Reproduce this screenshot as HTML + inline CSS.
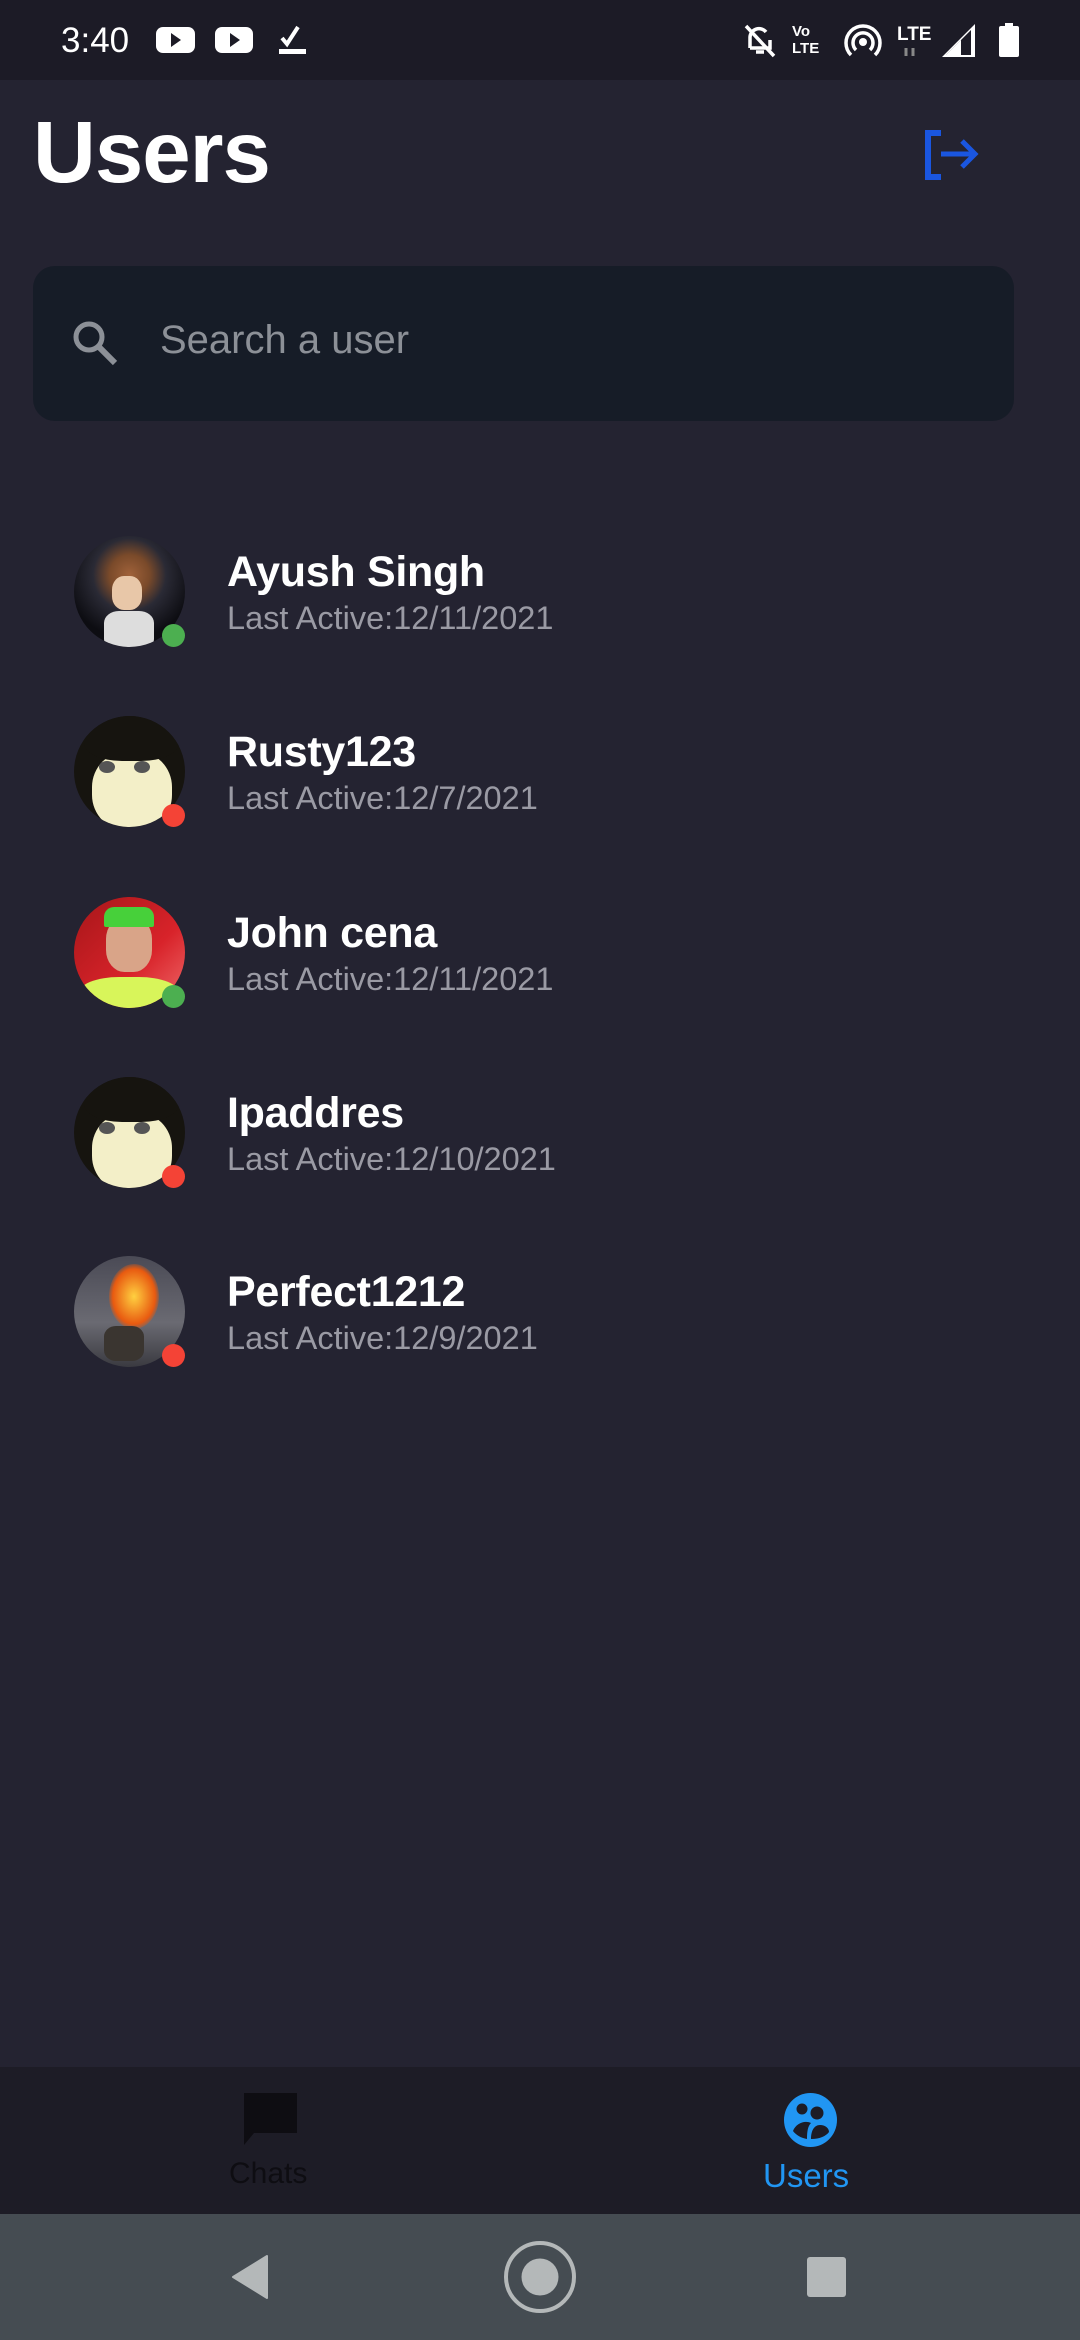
<!DOCTYPE html>
<html><head><meta charset="utf-8"><style>
*{margin:0;padding:0;box-sizing:border-box}
body{width:1080px;height:2340px;background:#242331;font-family:"Liberation Sans",sans-serif;position:relative;overflow:hidden}
.abs{position:absolute}
.sb{left:0;top:0;width:1080px;height:80px;background:#1c1b26}
.title{left:33px;top:103px;font-size:87px;font-weight:bold;color:#fff;letter-spacing:-1px}
.search{left:33px;top:266px;width:981px;height:155px;background:#161c27;border-radius:22px}
.ph{left:160px;top:318px;font-size:40px;color:#8c9097}
.name{left:227px;font-size:43px;font-weight:bold;color:#fff;letter-spacing:-0.3px}
.sub{left:227px;font-size:32.5px;color:#9a9aa4}
.av{left:74px;width:111px;height:111px;border-radius:50%;overflow:hidden}
.dot{width:23px;height:23px;border-radius:50%}
.bn{left:0;top:2067px;width:1080px;height:147px;background:#1d1c26}
.nav{left:0;top:2214px;width:1080px;height:126px;background:#454c52}
</style></head><body>
<div class="abs sb"></div>
<div class="abs" style="left:61px;top:21px;font-size:35px;color:#fff">3:40</div>
<svg class="abs" style="left:150px;top:20px" width="170" height="40" viewBox="0 0 170 40">
<rect x="6" y="7" width="39" height="26" rx="7" fill="#fff"/><path d="M21 13v14l10-7z" fill="#1c1b26"/>
<rect x="65" y="7" width="38" height="26" rx="7" fill="#fff"/><path d="M80 13v14l10-7z" fill="#1c1b26"/>
<path d="M132 18l5 6 11-17" stroke="#fff" stroke-width="4" fill="none"/><rect x="129" y="29" width="27" height="5" fill="#fff"/>
</svg>
<svg class="abs" style="left:740px;top:20px" width="290" height="40" viewBox="0 0 290 40">
<path d="M10 28V17a9 9 0 0 1 16-5M30 20v8H10M16 32h8M6 6l28 30" stroke="#fff" stroke-width="3.5" fill="none"/>
<text x="52" y="16" font-size="15" fill="#fff" font-family="Liberation Sans" font-weight="bold">Vo</text>
<text x="52" y="33" font-size="15" fill="#fff" font-family="Liberation Sans" font-weight="bold">LTE</text>
<circle cx="123" cy="22" r="4" fill="#fff"/><path d="M116 30a10 10 0 1 1 14 0M111 35a17 17 0 1 1 24 0" stroke="#fff" stroke-width="3.5" fill="none"/>
<text x="157" y="20" font-size="19" fill="#fff" font-family="Liberation Sans" font-weight="bold">LTE</text>
<path d="M166 28v8M173 28v8" stroke="#888" stroke-width="3"/>
<path d="M202 37L235 4v33z" fill="#fff"/><path d="M206 35l25-25v25z" fill="#1c1b26"/><path d="M206 35l15-15v15z" fill="#fff"/>
<rect x="259" y="6" width="20" height="31" rx="2" fill="#fff"/><rect x="265" y="3" width="8" height="4" fill="#fff"/>
</svg>
<div class="abs title">Users</div>
<svg class="abs" style="left:924px;top:129px" width="58" height="52" viewBox="0 0 58 52">
<path d="M17 4H4v44h13" stroke="#1a56e0" stroke-width="6" fill="none"/><path d="M17 25h32M38 12l13 13-13 13" stroke="#1a56e0" stroke-width="5" fill="none"/>
</svg>
<div class="abs search"></div>
<svg class="abs" style="left:70px;top:318px" width="50" height="50" viewBox="0 0 50 50">
<circle cx="19" cy="19" r="13" stroke="#8c9097" stroke-width="5" fill="none"/><path d="M28 28l17 17" stroke="#8c9097" stroke-width="6"/>
</svg>
<div class="abs ph">Search a user</div>

<div class="abs av" style="top:536px;background:radial-gradient(circle at 50% 35%,#a0623a 0,#7a4a2a 22%,#2a2a35 40%,#0d0d12 70%)"><div style="position:absolute;left:38px;top:40px;width:30px;height:34px;background:#e8c7a8;border-radius:40%"></div><div style="position:absolute;left:30px;top:75px;width:50px;height:40px;background:#ddd;border-radius:30%"></div></div>
<div class="abs dot" style="left:162px;top:624px;background:#4caf50"></div>
<div class="abs name" style="top:548px">Ayush Singh</div>
<div class="abs sub" style="top:600px">Last Active:12/11/2021</div>

<div class="abs av" style="top:716px;background:#16140f"><div style="position:absolute;left:18px;top:35px;width:80px;height:80px;background:#f3efc8;border-radius:45%"></div><div style="position:absolute;left:10px;top:0;width:95px;height:45px;background:#16140f;border-radius:0 0 40% 40%"></div><div style="position:absolute;left:25px;top:45px;width:16px;height:12px;background:#555;border-radius:50%"></div><div style="position:absolute;left:60px;top:45px;width:16px;height:12px;background:#555;border-radius:50%"></div></div>
<div class="abs dot" style="left:162px;top:804px;background:#f44336"></div>
<div class="abs name" style="top:728px">Rusty123</div>
<div class="abs sub" style="top:780px">Last Active:12/7/2021</div>

<div class="abs av" style="top:897px;background:linear-gradient(135deg,#a61619,#d8232a 60%,#f06a6a)"><div style="position:absolute;left:32px;top:20px;width:46px;height:55px;background:#d9a488;border-radius:40%"></div><div style="position:absolute;left:30px;top:10px;width:50px;height:20px;background:#47d03a;border-radius:10px 10px 2px 2px"></div><div style="position:absolute;left:5px;top:80px;width:100px;height:40px;background:#d8f55a;border-radius:40% 40% 0 0"></div></div>
<div class="abs dot" style="left:162px;top:985px;background:#4caf50"></div>
<div class="abs name" style="top:909px">John cena</div>
<div class="abs sub" style="top:961px">Last Active:12/11/2021</div>

<div class="abs av" style="top:1077px;background:#16140f"><div style="position:absolute;left:18px;top:35px;width:80px;height:80px;background:#f3efc8;border-radius:45%"></div><div style="position:absolute;left:10px;top:0;width:95px;height:45px;background:#16140f;border-radius:0 0 40% 40%"></div><div style="position:absolute;left:25px;top:45px;width:16px;height:12px;background:#555;border-radius:50%"></div><div style="position:absolute;left:60px;top:45px;width:16px;height:12px;background:#555;border-radius:50%"></div></div>
<div class="abs dot" style="left:162px;top:1165px;background:#f44336"></div>
<div class="abs name" style="top:1089px">Ipaddres</div>
<div class="abs sub" style="top:1141px">Last Active:12/10/2021</div>

<div class="abs av" style="top:1256px;background:linear-gradient(#4a4a55,#6a6a72 60%,#3a3a40)"><div style="position:absolute;left:35px;top:8px;width:50px;height:65px;background:radial-gradient(#ffd040,#e85a10 60%,rgba(200,50,0,0) 75%);border-radius:50%"></div><div style="position:absolute;left:30px;top:70px;width:40px;height:35px;background:#3a3530;border-radius:30%"></div></div>
<div class="abs dot" style="left:162px;top:1344px;background:#f44336"></div>
<div class="abs name" style="top:1268px">Perfect1212</div>
<div class="abs sub" style="top:1320px">Last Active:12/9/2021</div>

<div class="abs bn"></div>
<svg class="abs" style="left:244px;top:2093px" width="53" height="53" viewBox="0 0 53 53"><path d="M0 0h53v40H10L0 52z" fill="#0e0d12"/></svg>
<div class="abs" style="left:229px;top:2157px;font-size:30px;color:#0e0d12">Chats</div>
<svg class="abs" style="left:784px;top:2093px" width="53" height="54" viewBox="0 0 53 54">
<ellipse cx="26.5" cy="27" rx="26.5" ry="27" fill="#2196f3"/>
<circle cx="18" cy="16" r="5.5" fill="#1d1c26"/><circle cx="33" cy="20" r="6.5" fill="#1d1c26"/>
<path d="M9 38c3-8 12-11 18-8-3 3-4 8-4 16-6-1-11-4-14-8zM27 46c0-8 3-14 9-14 5 0 9 3 9 7-3 4-9 7-18 7z" fill="#1d1c26"/>
</svg>
<div class="abs" style="left:763px;top:2157px;font-size:33px;color:#2196f3">Users</div>
<div class="abs nav"></div>
<svg class="abs" style="left:225px;top:2230px" width="640" height="96" viewBox="0 0 640 96">
<path d="M42 26v42L8 47z" fill="#b4b8b9" stroke="#b4b8b9" stroke-width="2" stroke-linejoin="round"/>
<circle cx="315" cy="47" r="34" fill="none" stroke="#b4b8b9" stroke-width="4"/>
<circle cx="315" cy="47" r="18.5" fill="#b4b8b9"/>
<rect x="582" y="27" width="39" height="40" rx="3" fill="#b4b8b9"/>
</svg>
</body></html>
